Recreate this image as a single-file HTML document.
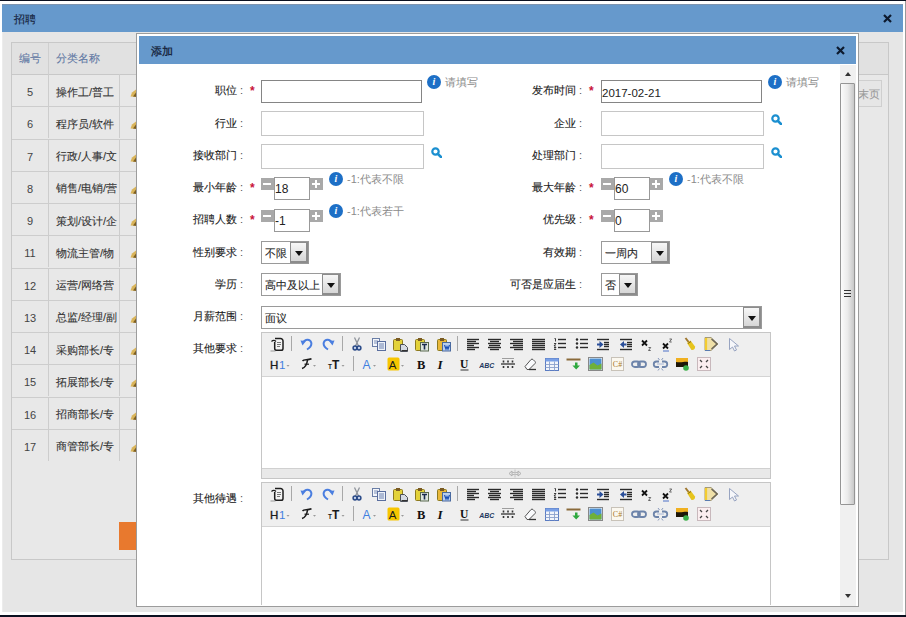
<!DOCTYPE html><html><head><meta charset="utf-8"><style>
*{box-sizing:border-box;margin:0;padding:0}
html,body{width:906px;height:617px;overflow:hidden;background:#fff;font-family:"Liberation Sans",sans-serif;font-size:12px;color:#333;position:relative}
div,span,svg{position:absolute}
.cj{font-size:11px;line-height:13px;white-space:nowrap;-webkit-text-stroke:0.1px currentColor}
.lbl{font-size:11px;line-height:13px;white-space:nowrap;text-align:right;color:#1a1a1a;-webkit-text-stroke:0.1px #1a1a1a}
.colon{font-size:11px;line-height:13px;color:#555}
.ast{color:#c8123a;font-size:12px;line-height:12px;font-weight:bold}
.inp{background:#fff;border:1px solid #c6c6c6}
.inp.dark{border-color:#858585}
.sel{background:#fff;border:1px solid #9a9a9a}
.sbtn{top:0;bottom:0;right:0;width:18px;border:2px solid #8c8c8c;border-left-width:1px;border-top-width:1px;background:linear-gradient(#f7f7f7,#d6d6d6)}
.sbtn:after{content:"";position:absolute;left:3.5px;top:8px;border-left:4px solid transparent;border-right:4px solid transparent;border-top:5px solid #111}
.nbtn{width:13px;height:12px;background:#a9a9a9}
.nbtn:before{content:"";position:absolute;left:2px;top:5px;width:8px;height:2px;background:#fff}
.nbtn.p:after{content:"";position:absolute;left:5px;top:2px;width:2px;height:8px;background:#fff}
.info{width:14px;height:14px;border-radius:7px;background:#1d6fc6;color:#fff;font:italic bold 10px/14px "Liberation Serif",serif;text-align:center}
.hint{color:#8a8a8a;font-size:11px;line-height:13px;white-space:nowrap}
.tb{background:#efefef;border:1px solid #c9c9c9}
</style></head><body>
<div style="left:0;top:0;width:906px;height:1px;background:#0b1020"></div>
<div style="left:2px;top:4px;width:901px;height:28px;background:#6699cc"></div>
<div class="cj" style="left:14px;top:13px;font-size:11px;color:#15223a;-webkit-text-stroke:0.15px #15223a">招聘</div>
<svg style="left:883px;top:14px" width="9" height="9" viewBox="0 0 9 9"><path d="M1 1L8 8M8 1L1 8" stroke="#0d1a2e" stroke-width="2.2"/></svg>
<div style="left:2px;top:32px;width:901px;height:580px;background:#e6e6e6;border-left:1px solid #ececec"></div>
<div style="left:905px;top:1px;width:1px;height:614px;background:#9a9a9a"></div>
<div style="left:2px;top:4px;width:901px;height:1px;background:#7d94b0"></div>
<div style="left:0;top:615px;width:906px;height:2px;background:#0b1020"></div>
<div style="left:11px;top:42px;width:878px;height:518px;border:1px solid #c8c8c8;background:#e8e8e8"></div>
<div style="left:12px;top:43px;width:876px;height:32px;background:#e1e1e1;border-bottom:1px solid #c8c8c8"></div>
<div style="left:48px;top:43px;width:1px;height:31px;background:#cfcfcf"></div>
<div class="cj" style="left:19px;top:52px;color:#5f78a3">编号</div>
<div class="cj" style="left:56px;top:52px;color:#5f78a3">分类名称</div>
<div style="left:12px;top:106.2px;width:840px;height:1px;background:#cdcdcd"></div>
<div style="left:48px;top:74.0px;width:1px;height:32.2px;background:#cdcdcd"></div>
<div style="left:119px;top:74.0px;width:1px;height:32.2px;background:#cdcdcd"></div>
<div style="left:12px;top:86.0px;width:36px;text-align:center;font-size:11px;line-height:13px;color:#444">5</div>
<div class="cj" style="left:56px;top:85.5px;color:#333">操作工/普工</div>
<svg style="left:129px;top:89.0px" width="8" height="8" viewBox="0 0 8 8"><path d="M1.5 7.5L3 3.5 7 0.5 8 1v7z" fill="#d9b45a"/><path d="M4 7.5L7 3.5 8 4v4z" fill="#7a5c22"/></svg>
<div style="left:12px;top:138.5px;width:840px;height:1px;background:#cdcdcd"></div>
<div style="left:48px;top:106.2px;width:1px;height:32.2px;background:#cdcdcd"></div>
<div style="left:119px;top:106.2px;width:1px;height:32.2px;background:#cdcdcd"></div>
<div style="left:12px;top:118.2px;width:36px;text-align:center;font-size:11px;line-height:13px;color:#444">6</div>
<div class="cj" style="left:56px;top:117.8px;color:#333">程序员/软件</div>
<svg style="left:129px;top:121.2px" width="8" height="8" viewBox="0 0 8 8"><path d="M1.5 7.5L3 3.5 7 0.5 8 1v7z" fill="#d9b45a"/><path d="M4 7.5L7 3.5 8 4v4z" fill="#7a5c22"/></svg>
<div style="left:12px;top:170.8px;width:840px;height:1px;background:#cdcdcd"></div>
<div style="left:48px;top:138.5px;width:1px;height:32.2px;background:#cdcdcd"></div>
<div style="left:119px;top:138.5px;width:1px;height:32.2px;background:#cdcdcd"></div>
<div style="left:12px;top:150.5px;width:36px;text-align:center;font-size:11px;line-height:13px;color:#444">7</div>
<div class="cj" style="left:56px;top:150.0px;color:#333">行政/人事/文</div>
<svg style="left:129px;top:153.5px" width="8" height="8" viewBox="0 0 8 8"><path d="M1.5 7.5L3 3.5 7 0.5 8 1v7z" fill="#d9b45a"/><path d="M4 7.5L7 3.5 8 4v4z" fill="#7a5c22"/></svg>
<div style="left:12px;top:203.0px;width:840px;height:1px;background:#cdcdcd"></div>
<div style="left:48px;top:170.8px;width:1px;height:32.2px;background:#cdcdcd"></div>
<div style="left:119px;top:170.8px;width:1px;height:32.2px;background:#cdcdcd"></div>
<div style="left:12px;top:182.8px;width:36px;text-align:center;font-size:11px;line-height:13px;color:#444">8</div>
<div class="cj" style="left:56px;top:182.2px;color:#333">销售/电销/营</div>
<svg style="left:129px;top:185.8px" width="8" height="8" viewBox="0 0 8 8"><path d="M1.5 7.5L3 3.5 7 0.5 8 1v7z" fill="#d9b45a"/><path d="M4 7.5L7 3.5 8 4v4z" fill="#7a5c22"/></svg>
<div style="left:12px;top:235.2px;width:840px;height:1px;background:#cdcdcd"></div>
<div style="left:48px;top:203.0px;width:1px;height:32.2px;background:#cdcdcd"></div>
<div style="left:119px;top:203.0px;width:1px;height:32.2px;background:#cdcdcd"></div>
<div style="left:12px;top:215.0px;width:36px;text-align:center;font-size:11px;line-height:13px;color:#444">9</div>
<div class="cj" style="left:56px;top:214.5px;color:#333">策划/设计/企</div>
<svg style="left:129px;top:218.0px" width="8" height="8" viewBox="0 0 8 8"><path d="M1.5 7.5L3 3.5 7 0.5 8 1v7z" fill="#d9b45a"/><path d="M4 7.5L7 3.5 8 4v4z" fill="#7a5c22"/></svg>
<div style="left:12px;top:267.5px;width:840px;height:1px;background:#cdcdcd"></div>
<div style="left:48px;top:235.2px;width:1px;height:32.2px;background:#cdcdcd"></div>
<div style="left:119px;top:235.2px;width:1px;height:32.2px;background:#cdcdcd"></div>
<div style="left:12px;top:247.2px;width:36px;text-align:center;font-size:11px;line-height:13px;color:#444">11</div>
<div class="cj" style="left:56px;top:246.8px;color:#333">物流主管/物</div>
<svg style="left:129px;top:250.2px" width="8" height="8" viewBox="0 0 8 8"><path d="M1.5 7.5L3 3.5 7 0.5 8 1v7z" fill="#d9b45a"/><path d="M4 7.5L7 3.5 8 4v4z" fill="#7a5c22"/></svg>
<div style="left:12px;top:299.8px;width:840px;height:1px;background:#cdcdcd"></div>
<div style="left:48px;top:267.5px;width:1px;height:32.2px;background:#cdcdcd"></div>
<div style="left:119px;top:267.5px;width:1px;height:32.2px;background:#cdcdcd"></div>
<div style="left:12px;top:279.5px;width:36px;text-align:center;font-size:11px;line-height:13px;color:#444">12</div>
<div class="cj" style="left:56px;top:279.0px;color:#333">运营/网络营</div>
<svg style="left:129px;top:282.5px" width="8" height="8" viewBox="0 0 8 8"><path d="M1.5 7.5L3 3.5 7 0.5 8 1v7z" fill="#d9b45a"/><path d="M4 7.5L7 3.5 8 4v4z" fill="#7a5c22"/></svg>
<div style="left:12px;top:332.0px;width:840px;height:1px;background:#cdcdcd"></div>
<div style="left:48px;top:299.8px;width:1px;height:32.2px;background:#cdcdcd"></div>
<div style="left:119px;top:299.8px;width:1px;height:32.2px;background:#cdcdcd"></div>
<div style="left:12px;top:311.8px;width:36px;text-align:center;font-size:11px;line-height:13px;color:#444">13</div>
<div class="cj" style="left:56px;top:311.2px;color:#333">总监/经理/副</div>
<svg style="left:129px;top:314.8px" width="8" height="8" viewBox="0 0 8 8"><path d="M1.5 7.5L3 3.5 7 0.5 8 1v7z" fill="#d9b45a"/><path d="M4 7.5L7 3.5 8 4v4z" fill="#7a5c22"/></svg>
<div style="left:12px;top:364.2px;width:840px;height:1px;background:#cdcdcd"></div>
<div style="left:48px;top:332.0px;width:1px;height:32.2px;background:#cdcdcd"></div>
<div style="left:119px;top:332.0px;width:1px;height:32.2px;background:#cdcdcd"></div>
<div style="left:12px;top:344.0px;width:36px;text-align:center;font-size:11px;line-height:13px;color:#444">14</div>
<div class="cj" style="left:56px;top:343.5px;color:#333">采购部长/专</div>
<svg style="left:129px;top:347.0px" width="8" height="8" viewBox="0 0 8 8"><path d="M1.5 7.5L3 3.5 7 0.5 8 1v7z" fill="#d9b45a"/><path d="M4 7.5L7 3.5 8 4v4z" fill="#7a5c22"/></svg>
<div style="left:12px;top:396.5px;width:840px;height:1px;background:#cdcdcd"></div>
<div style="left:48px;top:364.2px;width:1px;height:32.2px;background:#cdcdcd"></div>
<div style="left:119px;top:364.2px;width:1px;height:32.2px;background:#cdcdcd"></div>
<div style="left:12px;top:376.2px;width:36px;text-align:center;font-size:11px;line-height:13px;color:#444">15</div>
<div class="cj" style="left:56px;top:375.8px;color:#333">拓展部长/专</div>
<svg style="left:129px;top:379.2px" width="8" height="8" viewBox="0 0 8 8"><path d="M1.5 7.5L3 3.5 7 0.5 8 1v7z" fill="#d9b45a"/><path d="M4 7.5L7 3.5 8 4v4z" fill="#7a5c22"/></svg>
<div style="left:12px;top:428.8px;width:840px;height:1px;background:#cdcdcd"></div>
<div style="left:48px;top:396.5px;width:1px;height:32.2px;background:#cdcdcd"></div>
<div style="left:119px;top:396.5px;width:1px;height:32.2px;background:#cdcdcd"></div>
<div style="left:12px;top:408.5px;width:36px;text-align:center;font-size:11px;line-height:13px;color:#444">16</div>
<div class="cj" style="left:56px;top:408.0px;color:#333">招商部长/专</div>
<svg style="left:129px;top:411.5px" width="8" height="8" viewBox="0 0 8 8"><path d="M1.5 7.5L3 3.5 7 0.5 8 1v7z" fill="#d9b45a"/><path d="M4 7.5L7 3.5 8 4v4z" fill="#7a5c22"/></svg>
<div style="left:48px;top:428.8px;width:1px;height:32.2px;background:#cdcdcd"></div>
<div style="left:119px;top:428.8px;width:1px;height:32.2px;background:#cdcdcd"></div>
<div style="left:12px;top:440.8px;width:36px;text-align:center;font-size:11px;line-height:13px;color:#444">17</div>
<div class="cj" style="left:56px;top:440.2px;color:#333">商管部长/专</div>
<svg style="left:129px;top:443.8px" width="8" height="8" viewBox="0 0 8 8"><path d="M1.5 7.5L3 3.5 7 0.5 8 1v7z" fill="#d9b45a"/><path d="M4 7.5L7 3.5 8 4v4z" fill="#7a5c22"/></svg>
<div style="left:119px;top:522px;width:60px;height:28px;background:#e8792e"></div>
<div style="left:852px;top:80px;width:30px;height:27px;border:1px solid #cfcfcf;background:#e6e6e6"></div>
<div class="cj" style="left:858px;top:88px;color:#9a9a9a">末页</div>
<div style="left:136px;top:33px;width:723px;height:574px;background:#fff;border:1px solid #9c9c9c"></div>
<div style="left:139px;top:36px;width:717px;height:28px;background:#6699cc"></div>
<div class="cj" style="left:151px;top:45px;color:#15223a;-webkit-text-stroke:0.3px #15223a">添加</div>
<svg style="left:836px;top:46px" width="9" height="9" viewBox="0 0 9 9"><path d="M1 1L8 8M8 1L1 8" stroke="#0d1a2e" stroke-width="2.2"/></svg>
<div style="left:840px;top:65px;width:16px;height:541px;background:#f0f0f0"></div>
<div style="left:845px;top:72px;border-left:3.5px solid transparent;border-right:3.5px solid transparent;border-bottom:4px solid #333"></div>
<div style="left:845px;top:594px;border-left:3.5px solid transparent;border-right:3.5px solid transparent;border-top:4px solid #333"></div>
<div style="left:840px;top:83px;width:15px;height:422px;border:1px solid #959595;border-radius:1px;background:linear-gradient(90deg,#fbfbfb,#ebebeb 50%,#c8c8c8)"></div>
<div style="left:844px;top:290px;width:7px;height:1px;background:#333"></div>
<div style="left:844px;top:293px;width:7px;height:1px;background:#333"></div>
<div style="left:844px;top:296px;width:7px;height:1px;background:#333"></div>
<div class="lbl" style="left:117px;top:84px;width:120px">职位</div>
<div class="colon" style="left:240px;top:84px">:</div>
<div class="ast" style="left:250px;top:85px">*</div>
<div class="inp dark" style="left:261px;top:80px;width:161px;height:23px"></div>
<div class="info" style="left:427px;top:75px">i</div>
<div class="hint" style="left:445px;top:76px">请填写</div>
<div class="lbl" style="left:456px;top:84px;width:120px">发布时间</div>
<div class="colon" style="left:579px;top:84px">:</div>
<div class="ast" style="left:589px;top:85px">*</div>
<div class="inp dark" style="left:601px;top:80px;width:161px;height:23px"></div>
<div style="left:602px;top:86px;font-size:11.5px;line-height:14px;color:#222">2017-02-21</div>
<div class="info" style="left:768px;top:75px">i</div>
<div class="hint" style="left:786px;top:76px">请填写</div>
<div class="lbl" style="left:117px;top:117px;width:120px">行业</div>
<div class="colon" style="left:240px;top:117px">:</div>
<div class="inp" style="left:261px;top:111px;width:163px;height:25px"></div>
<div class="lbl" style="left:456px;top:117px;width:120px">企业</div>
<div class="colon" style="left:579px;top:117px">:</div>
<div class="inp" style="left:601px;top:111px;width:163px;height:25px"></div>
<svg style="left:771px;top:114px" width="11" height="11" viewBox="0 0 11 11"><circle cx="4.5" cy="4.5" r="3.2" fill="none" stroke="#1b8fd0" stroke-width="2.2"/><path d="M6.8 6.8L10 10" stroke="#1b8fd0" stroke-width="2.6" stroke-linecap="round"/></svg>
<div class="lbl" style="left:117px;top:149px;width:120px">接收部门</div>
<div class="colon" style="left:240px;top:149px">:</div>
<div class="inp" style="left:261px;top:144px;width:163px;height:25px"></div>
<svg style="left:431px;top:147px" width="11" height="11" viewBox="0 0 11 11"><circle cx="4.5" cy="4.5" r="3.2" fill="none" stroke="#1b8fd0" stroke-width="2.2"/><path d="M6.8 6.8L10 10" stroke="#1b8fd0" stroke-width="2.6" stroke-linecap="round"/></svg>
<div class="lbl" style="left:456px;top:149px;width:120px">处理部门</div>
<div class="colon" style="left:579px;top:149px">:</div>
<div class="inp" style="left:601px;top:144px;width:163px;height:25px"></div>
<svg style="left:771px;top:147px" width="11" height="11" viewBox="0 0 11 11"><circle cx="4.5" cy="4.5" r="3.2" fill="none" stroke="#1b8fd0" stroke-width="2.2"/><path d="M6.8 6.8L10 10" stroke="#1b8fd0" stroke-width="2.6" stroke-linecap="round"/></svg>
<div class="lbl" style="left:117px;top:181px;width:120px">最小年龄</div>
<div class="colon" style="left:240px;top:181px">:</div>
<div class="ast" style="left:250px;top:182px">*</div>
<div class="nbtn" style="left:261px;top:178px"></div>
<div class="inp" style="left:274px;top:177px;width:36px;height:23px;border-color:#999"></div>
<div style="left:275px;top:182px;font-size:12px;line-height:14px;color:#222">18</div>
<div class="nbtn p" style="left:310px;top:178px"></div>
<div class="info" style="left:329px;top:172px">i</div>
<div class="hint" style="left:347px;top:173px">-1:代表不限</div>
<div class="lbl" style="left:456px;top:181px;width:120px">最大年龄</div>
<div class="colon" style="left:579px;top:181px">:</div>
<div class="ast" style="left:589px;top:182px">*</div>
<div class="nbtn" style="left:601px;top:178px"></div>
<div class="inp" style="left:614px;top:177px;width:36px;height:23px;border-color:#999"></div>
<div style="left:615px;top:182px;font-size:12px;line-height:14px;color:#222">60</div>
<div class="nbtn p" style="left:650px;top:178px"></div>
<div class="info" style="left:669px;top:172px">i</div>
<div class="hint" style="left:687px;top:173px">-1:代表不限</div>
<div class="lbl" style="left:117px;top:213px;width:120px">招聘人数</div>
<div class="colon" style="left:240px;top:213px">:</div>
<div class="ast" style="left:250px;top:214px">*</div>
<div class="nbtn" style="left:261px;top:210px"></div>
<div class="inp" style="left:274px;top:209px;width:36px;height:23px;border-color:#999"></div>
<div style="left:275px;top:214px;font-size:12px;line-height:14px;color:#222">-1</div>
<div class="nbtn p" style="left:310px;top:210px"></div>
<div class="info" style="left:329px;top:204px">i</div>
<div class="hint" style="left:347px;top:205px">-1:代表若干</div>
<div class="lbl" style="left:456px;top:213px;width:120px">优先级</div>
<div class="colon" style="left:579px;top:213px">:</div>
<div class="ast" style="left:589px;top:214px">*</div>
<div class="nbtn" style="left:601px;top:210px"></div>
<div class="inp" style="left:614px;top:209px;width:36px;height:23px;border-color:#999"></div>
<div style="left:615px;top:214px;font-size:12px;line-height:14px;color:#222">0</div>
<div class="nbtn p" style="left:650px;top:210px"></div>
<div class="lbl" style="left:117px;top:246px;width:120px">性别要求</div>
<div class="colon" style="left:240px;top:246px">:</div>
<div class="sel" style="left:261px;top:241px;width:48px;height:23px"><div class="sbtn"></div></div>
<div class="cj" style="left:265px;top:247px;font-size:11px;color:#222">不限</div>
<div class="lbl" style="left:456px;top:246px;width:120px">有效期</div>
<div class="colon" style="left:579px;top:246px">:</div>
<div class="sel" style="left:601px;top:241px;width:69px;height:23px"><div class="sbtn"></div></div>
<div class="cj" style="left:605px;top:247px;font-size:11px;color:#222">一周内</div>
<div class="lbl" style="left:117px;top:278px;width:120px">学历</div>
<div class="colon" style="left:240px;top:278px">:</div>
<div class="sel" style="left:261px;top:273px;width:80px;height:23px"><div class="sbtn"></div></div>
<div class="cj" style="left:265px;top:279px;font-size:11px;color:#222">高中及以上</div>
<div class="lbl" style="left:456px;top:278px;width:120px">可否是应届生</div>
<div class="colon" style="left:579px;top:278px">:</div>
<div class="sel" style="left:601px;top:273px;width:37px;height:23px"><div class="sbtn"></div></div>
<div class="cj" style="left:605px;top:279px;font-size:11px;color:#222">否</div>
<div class="lbl" style="left:117px;top:310px;width:120px">月薪范围</div>
<div class="colon" style="left:240px;top:310px">:</div>
<div class="sel" style="left:261px;top:306px;width:501px;height:23px"><div class="sbtn"></div></div>
<div class="cj" style="left:265px;top:312px;font-size:11px;color:#222">面议</div>
<div class="lbl" style="left:117px;top:342px;width:120px">其他要求</div>
<div class="colon" style="left:240px;top:342px">:</div>
<div style="left:261px;top:332px;width:510px;height:147px;border:1px solid #c6c6c6;background:#fff"></div>
<div style="left:262px;top:333px;width:508px;height:44px;background:#efefef;border-bottom:1px solid #d4d4d4"></div>
<svg style="left:270px;top:336px" width="15" height="16" viewBox="0 0 15 16"><path d="M5 2.5h5.5a2.5 2.5 0 0 1 2.5 2.5v7.5a1.8 1.8 0 0 1-1.8 1.8H6.5a1.8 1.8 0 0 1-1.8-1.8V6" fill="#f4f4f4" stroke="#1e1e1e" stroke-width="1.5"/><path d="M1.5 5.5c1.5-1.5 3-1.5 4.5 0" fill="none" stroke="#1e1e1e" stroke-width="1.3"/><path d="M7 6.5h4M7 8.5h4M7 10.5h3" stroke="#777" stroke-width="1"/><path d="M0.5 15h5" stroke="#999" stroke-width="1"/></svg>
<svg style="left:300px;top:337px" width="13" height="16" viewBox="0 0 13 16"><path d="M3 5.5C5 2 10 1.5 11.2 5.5 12 8.5 9.5 11 7 12.5" fill="none" stroke="#4a7ee0" stroke-width="2"/><path d="M0.5 3.5l5.5 0.5-3.5 4.5z" fill="#4a7ee0"/></svg>
<svg style="left:322px;top:337px" width="13" height="16" viewBox="0 0 13 16"><path d="M10 5.5C8 2 3 1.5 1.8 5.5 1 8.5 3.5 11 6 12.5" fill="none" stroke="#4a7ee0" stroke-width="2"/><path d="M12.5 3.5L7 4l3.5 4.5z" fill="#4a7ee0"/></svg>
<svg style="left:351px;top:336px" width="12" height="16" viewBox="0 0 12 16"><path d="M3.5 1.5L7.5 10M8.5 1.5L4.5 10" stroke="#8f949c" stroke-width="1.3"/><circle cx="4" cy="12" r="1.9" fill="#c8d4ec" stroke="#2a4a88" stroke-width="1.5"/><circle cx="8" cy="12" r="1.9" fill="#c8d4ec" stroke="#2a4a88" stroke-width="1.5"/></svg>
<svg style="left:371px;top:336px" width="16" height="16" viewBox="0 0 16 16"><rect x="1.5" y="2.5" width="7" height="8" fill="#f4f6fa" stroke="#6a7ea6"/><path d="M3 5h4M3 7h4" stroke="#7d90b8"/><rect x="6.5" y="5.5" width="8" height="9" fill="#eef2f8" stroke="#5a6e9e"/><path d="M8 8h5M8 10h5M8 12h5" stroke="#6a80b0" stroke-width="1.1"/></svg>
<svg style="left:392px;top:336px" width="17" height="16" viewBox="0 0 17 16"><rect x="1.5" y="3.5" width="9" height="11" rx="1" fill="#e3d23a" stroke="#8d7a20"/><rect x="4" y="2" width="4" height="3" fill="#7a5a22"/><path d="M8.5 8.5h4l3 3v4h-7z" fill="#d4dae4" stroke="#4a4f58"/><path d="M9.5 14.5h6" stroke="#333"/></svg>
<svg style="left:414px;top:336px" width="16" height="16" viewBox="0 0 16 16"><rect x="1.5" y="3.5" width="9" height="11" rx="1" fill="#e3d23a" stroke="#8d7a20"/><rect x="4" y="2" width="4" height="3" fill="#7a5a22"/><rect x="6.5" y="6.5" width="8" height="8.5" fill="#dfe6e0" stroke="#5a6a50"/><path d="M8 8.5h5M10.5 8.5v5" stroke="#1a2a50" stroke-width="1.6"/></svg>
<svg style="left:436px;top:336px" width="16" height="16" viewBox="0 0 16 16"><rect x="1.5" y="3.5" width="9" height="11" rx="1" fill="#e9b83a" stroke="#8d7a20"/><rect x="4" y="2" width="4" height="3" fill="#7a5a22"/><rect x="6.5" y="6.5" width="8" height="8.5" fill="#bcd0ee" stroke="#4a6aa0"/><path d="M8.5 9l1.5 4 1-2.5 1 2.5 1.5-4" fill="none" stroke="#1c50b8" stroke-width="1.2"/></svg>
<svg style="left:466px;top:337px" width="14" height="16" viewBox="0 0 14 16"><path d="M1 2.5H13" stroke="#2b2b2b" stroke-width="1.4"/><path d="M1 4.5H10" stroke="#2b2b2b" stroke-width="1.4"/><path d="M1 6.5H13" stroke="#2b2b2b" stroke-width="1.4"/><path d="M1 8.5H8" stroke="#2b2b2b" stroke-width="1.4"/><path d="M1 10.5H13" stroke="#2b2b2b" stroke-width="1.4"/><path d="M1 12.5H9" stroke="#2b2b2b" stroke-width="1.4"/></svg>
<svg style="left:487px;top:337px" width="15" height="16" viewBox="0 0 15 16"><path d="M1 2.5H14" stroke="#2b2b2b" stroke-width="1.4"/><path d="M3 4.5H12" stroke="#2b2b2b" stroke-width="1.4"/><path d="M1 6.5H14" stroke="#2b2b2b" stroke-width="1.4"/><path d="M2 8.5H13" stroke="#2b2b2b" stroke-width="1.4"/><path d="M1 10.5H14" stroke="#2b2b2b" stroke-width="1.4"/><path d="M3 12.5H12" stroke="#2b2b2b" stroke-width="1.4"/></svg>
<svg style="left:509px;top:337px" width="15" height="16" viewBox="0 0 15 16"><path d="M1 2.5H14" stroke="#2b2b2b" stroke-width="1.4"/><path d="M4 4.5H14" stroke="#2b2b2b" stroke-width="1.4"/><path d="M1 6.5H14" stroke="#2b2b2b" stroke-width="1.4"/><path d="M4 8.5H14" stroke="#2b2b2b" stroke-width="1.4"/><path d="M1 10.5H14" stroke="#2b2b2b" stroke-width="1.4"/><path d="M5 12.5H14" stroke="#2b2b2b" stroke-width="1.4"/></svg>
<svg style="left:531px;top:337px" width="15" height="16" viewBox="0 0 15 16"><path d="M1 2.5H14" stroke="#2b2b2b" stroke-width="1.4"/><path d="M1 4.5H14" stroke="#2b2b2b" stroke-width="1.4"/><path d="M1 6.5H14" stroke="#2b2b2b" stroke-width="1.4"/><path d="M1 8.5H14" stroke="#2b2b2b" stroke-width="1.4"/><path d="M1 10.5H14" stroke="#2b2b2b" stroke-width="1.4"/><path d="M1 12.5H14" stroke="#2b2b2b" stroke-width="1.4"/></svg>
<svg style="left:553px;top:337px" width="15" height="16" viewBox="0 0 15 16"><path d="M1.5 1.5h1v3M1 6.5h2l-2 2.5h2M1 10.5h2l-1 1 1 1H1" fill="none" stroke="#2b2b2b" stroke-width="0.9"/><path d="M5 2.5H13" stroke="#2b2b2b" stroke-width="1.4"/><path d="M5 6.5H13" stroke="#2b2b2b" stroke-width="1.4"/><path d="M5 10.5H13" stroke="#2b2b2b" stroke-width="1.4"/></svg>
<svg style="left:575px;top:337px" width="14" height="16" viewBox="0 0 14 16"><circle cx="2" cy="2.5" r="1.2" fill="#2b2b2b"/><circle cx="2" cy="6.5" r="1.2" fill="#2b2b2b"/><circle cx="2" cy="10.5" r="1.2" fill="#2b2b2b"/><path d="M5 2.5H13" stroke="#2b2b2b" stroke-width="1.4"/><path d="M5 6.5H13" stroke="#2b2b2b" stroke-width="1.4"/><path d="M5 10.5H13" stroke="#2b2b2b" stroke-width="1.4"/></svg>
<svg style="left:596px;top:337px" width="14" height="16" viewBox="0 0 14 16"><path d="M1 2.5H13" stroke="#2b2b2b" stroke-width="1.4"/><path d="M1 12.5H13" stroke="#2b2b2b" stroke-width="1.4"/><path d="M8 5.5H13" stroke="#2b2b2b" stroke-width="1.4"/><path d="M8 7.5H13" stroke="#2b2b2b" stroke-width="1.4"/><path d="M8 9.5H13" stroke="#2b2b2b" stroke-width="1.4"/><path d="M1 6.5h2.5v-2.5l4 3.5-4 3.5v-2.5H1z" fill="#2a4f9a"/></svg>
<svg style="left:619px;top:337px" width="14" height="16" viewBox="0 0 14 16"><path d="M1 2.5H13" stroke="#2b2b2b" stroke-width="1.4"/><path d="M1 12.5H13" stroke="#2b2b2b" stroke-width="1.4"/><path d="M8 5.5H13" stroke="#2b2b2b" stroke-width="1.4"/><path d="M8 7.5H13" stroke="#2b2b2b" stroke-width="1.4"/><path d="M8 9.5H13" stroke="#2b2b2b" stroke-width="1.4"/><path d="M7.5 6.5H5v-2.5l-4 3.5 4 3.5v-2.5h2.5z" fill="#2a4f9a"/></svg>
<svg style="left:641px;top:337px" width="11" height="16" viewBox="0 0 11 16"><path d="M1 3.5l5 5M6 3.5l-5 5" stroke="#111" stroke-width="1.8"/><path d="M7.5 10.5h2.2l-2.2 3h2.2" fill="none" stroke="#555" stroke-width="0.9"/></svg>
<svg style="left:662px;top:337px" width="12" height="16" viewBox="0 0 12 16"><path d="M1 6.5l5 5M6 6.5l-5 5" stroke="#111" stroke-width="1.8"/><path d="M7.5 2h2.2l-2.2 3h2.2" fill="none" stroke="#555" stroke-width="0.9"/><path d="M1 14h6" stroke="#3a62c4" stroke-width="0.9"/></svg>
<svg style="left:683px;top:337px" width="13" height="16" viewBox="0 0 13 16"><path d="M2.5 1L6 5.5" stroke="#a07830" stroke-width="2"/><path d="M4 6L7.5 3.5 12 9.5C12.5 12 10.5 13.5 8.5 13z" fill="#e6c41c"/><path d="M5 6.5L8 4.5" stroke="#8a6a20" stroke-width="1"/></svg>
<svg style="left:703px;top:336px" width="17" height="16" viewBox="0 0 17 16"><path d="M2 1.5h6l7 6.5-7 6.5H2z" fill="#efe0a8" stroke="#a39a7a"/><path d="M3 2v12" stroke="#f3cc30" stroke-width="2.2"/><path d="M8.5 3l5.5 5-5.5 5" fill="none" stroke="#6a6458" stroke-width="1.4"/><path d="M2 14.5h5" stroke="#5a7bb0" stroke-width="1"/></svg>
<svg style="left:728px;top:337px" width="11" height="16" viewBox="0 0 11 16"><path d="M1.5 1.5v11l3-2.5 2 4 2-1-2-4h4z" fill="#f6f7fa" stroke="#8d9bbb" stroke-width="0.9"/></svg>
<div style="left:291px;top:336px;width:1px;height:15px;background:#a8a8a8"></div>
<div style="left:342px;top:336px;width:1px;height:15px;background:#a8a8a8"></div>
<div style="left:457px;top:336px;width:1px;height:15px;background:#a8a8a8"></div>
<svg style="left:270px;top:356px" width="21" height="16" viewBox="0 0 21 16"><text x="0" y="12.5" font-family="Liberation Sans" font-size="11.5" fill="#1b1b1b" stroke="#1b1b1b" stroke-width="0.35">H</text><text x="9" y="12.5" font-family="Liberation Sans" font-size="11.5" fill="#3f7ee0">1</text><path d="M16.5 9h3l-1.5 1.8z" fill="#999"/></svg>
<svg style="left:300px;top:356px" width="18" height="16" viewBox="0 0 18 16"><path d="M2.5 5C4 3 7 4.5 11.5 2.8" fill="none" stroke="#1b1b1b" stroke-width="1.5"/><path d="M7.5 4C7 8 5.5 11.5 2 12.5" fill="none" stroke="#1b1b1b" stroke-width="1.6"/><path d="M4.5 8.2h4.5" stroke="#1b1b1b" stroke-width="1.2"/><path d="M13 9h3l-1.5 1.8z" fill="#999"/></svg>
<svg style="left:327px;top:356px" width="19" height="16" viewBox="0 0 19 16"><text x="1" y="13" font-family="Liberation Sans" font-weight="bold" font-size="6.5" fill="#1b1b1b">T</text><text x="5" y="12.5" font-family="Liberation Sans" font-weight="bold" font-size="12" fill="#1b1b1b">T</text><path d="M14.5 9h3l-1.5 1.8z" fill="#999"/></svg>
<svg style="left:362px;top:356px" width="16" height="16" viewBox="0 0 16 16"><text x="0.5" y="12.5" font-family="Liberation Sans" font-size="12" fill="#3f7ee0">A</text><path d="M11 9h3l-1.5 1.8z" fill="#999"/></svg>
<svg style="left:387px;top:356px" width="18" height="16" viewBox="0 0 18 16"><rect x="0.5" y="1.5" width="12" height="13" rx="1.5" fill="#f7c600"/><text x="1.8" y="12.5" font-family="Liberation Sans" font-size="11.5" fill="#1b1b1b">A</text><path d="M14 9h3l-1.5 1.8z" fill="#999"/></svg>
<svg style="left:416px;top:356px" width="12" height="16" viewBox="0 0 12 16"><text x="1" y="12.5" font-family="Liberation Serif" font-weight="bold" font-size="12.5" fill="#111">B</text></svg>
<svg style="left:437px;top:356px" width="11" height="16" viewBox="0 0 11 16"><text x="0.5" y="12.5" font-family="Liberation Serif" font-style="italic" font-weight="bold" font-size="13" fill="#111">I</text></svg>
<svg style="left:459px;top:356px" width="12" height="16" viewBox="0 0 12 16"><text x="1" y="11.5" font-family="Liberation Serif" font-weight="bold" font-size="11.5" fill="#111">U</text><path d="M1.5 14h8" stroke="#333" stroke-width="1"/></svg>
<svg style="left:479px;top:356px" width="16" height="16" viewBox="0 0 16 16"><text x="0.3" y="12" font-family="Liberation Sans" font-weight="bold" font-style="italic" font-size="8" fill="#22385e" textLength="15" lengthAdjust="spacingAndGlyphs">ABC</text></svg>
<svg style="left:500px;top:356px" width="16" height="16" viewBox="0 0 16 16"><path d="M2 2.5h12" stroke="#888" stroke-width="0.8"/><path d="M3.5 4.5v2M8 4.5v2M12.5 4.5v2M3.5 10v2M8 10v2M12.5 10v2" stroke="#333" stroke-width="1.6"/><path d="M1 8h14" stroke="#333" stroke-width="1.3"/></svg>
<svg style="left:523px;top:356px" width="14" height="16" viewBox="0 0 14 16"><path d="M2 10.5L8 3.5a1.5 1.5 0 0 1 2 0l2 2a1.5 1.5 0 0 1 0 2L6 13.5H4z" fill="#fafbfd" stroke="#555" stroke-width="1"/><path d="M6 13.5h7" stroke="#333" stroke-width="1.3"/></svg>
<svg style="left:544px;top:356px" width="16" height="16" viewBox="0 0 16 16"><rect x="1.5" y="2.5" width="13" height="12" fill="#f2f5fb" stroke="#5b7cc2"/><rect x="1.5" y="2.5" width="13" height="3" fill="#7aa0e6"/><path d="M1.5 8.5h13M1.5 11.5h13M5.5 5.5v9M10.5 5.5v9" stroke="#8aa0cc" stroke-width="0.9"/></svg>
<svg style="left:566px;top:356px" width="16" height="16" viewBox="0 0 16 16"><path d="M0.5 3.5h14" stroke="#8a6a3a" stroke-width="2"/><path d="M9 6.5h2.5v3H14l-3.8 4-3.8-4h2.6z" fill="#2ea83e"/></svg>
<svg style="left:587px;top:356px" width="17" height="16" viewBox="0 0 17 16"><rect x="1.5" y="1.5" width="14" height="13" fill="#fff" stroke="#888"/><rect x="2.5" y="2.5" width="12" height="11" fill="#4d8fd0"/><path d="M2.5 13.5V9l4-2.5 4 3 4-2v6z" fill="#6fb03a"/></svg>
<svg style="left:610px;top:356px" width="15" height="16" viewBox="0 0 15 16"><rect x="1.5" y="1.5" width="12" height="13" fill="#fbf8f0" stroke="#c8c2b8"/><text x="2.8" y="11" font-family="Liberation Serif" font-size="8" fill="#a8782c">C#</text></svg>
<svg style="left:631px;top:356px" width="16" height="16" viewBox="0 0 16 16"><rect x="1" y="5.5" width="8" height="5.5" rx="2.75" fill="none" stroke="#6d84aa" stroke-width="1.8"/><rect x="7" y="5.5" width="8" height="5.5" rx="2.75" fill="none" stroke="#6d84aa" stroke-width="1.8"/></svg>
<svg style="left:652px;top:356px" width="17" height="16" viewBox="0 0 17 16"><path d="M7 5.5H4.5a2.75 2.75 0 0 0 0 5.5H7M10 5.5h2.5a2.75 2.75 0 0 1 0 5.5H10" fill="none" stroke="#6d84aa" stroke-width="1.8"/><path d="M6 2L7.5 4M11 2L9.5 4M6 14.5l1.5-2M11 14.5l-1.5-2" stroke="#7d8fb5" stroke-width="0.9"/><path d="M5 8h7" stroke="#a8b8d8" stroke-width="1"/></svg>
<svg style="left:675px;top:356px" width="15" height="16" viewBox="0 0 15 16"><rect x="1" y="2" width="12" height="9" fill="#1d1608"/><path d="M1 2h12v4c-3-1-6 1-12 0z" fill="#f0b020"/><circle cx="11" cy="12" r="2.8" fill="#3cb04a"/></svg>
<svg style="left:696px;top:356px" width="16" height="16" viewBox="0 0 16 16"><rect x="1.5" y="1.5" width="13" height="13" fill="#fbeef0" stroke="#c8b8bc"/><path d="M4 4l2 2M12 4l-2 2M4 12l2-2M12 12l-2-2" stroke="#444" stroke-width="1.3"/></svg>
<div style="left:353px;top:356px;width:1px;height:15px;background:#a8a8a8"></div>
<div style="left:262px;top:468px;width:508px;height:10px;background:#e9e9e9;border-top:1px solid #d0d0d0"></div>
<svg style="left:508px;top:469px" width="14" height="9" viewBox="0 0 14 9"><path d="M1 4.5L4 2v5zM13 4.5L10 2v5z" fill="none" stroke="#b0b0b0"/><path d="M4 3.5h6M4 5.5h6" stroke="#b8b8b8"/><path d="M7 0.5v8" stroke="#c4c4c4"/></svg>
<div class="lbl" style="left:117px;top:492px;width:120px">其他待遇</div>
<div class="colon" style="left:240px;top:492px">:</div>
<div style="left:261px;top:482px;width:510px;height:124px;border:1px solid #c6c6c6;background:#fff"></div>
<div style="left:262px;top:483px;width:508px;height:44px;background:#efefef;border-bottom:1px solid #d4d4d4"></div>
<svg style="left:270px;top:486px" width="15" height="16" viewBox="0 0 15 16"><path d="M5 2.5h5.5a2.5 2.5 0 0 1 2.5 2.5v7.5a1.8 1.8 0 0 1-1.8 1.8H6.5a1.8 1.8 0 0 1-1.8-1.8V6" fill="#f4f4f4" stroke="#1e1e1e" stroke-width="1.5"/><path d="M1.5 5.5c1.5-1.5 3-1.5 4.5 0" fill="none" stroke="#1e1e1e" stroke-width="1.3"/><path d="M7 6.5h4M7 8.5h4M7 10.5h3" stroke="#777" stroke-width="1"/><path d="M0.5 15h5" stroke="#999" stroke-width="1"/></svg>
<svg style="left:300px;top:487px" width="13" height="16" viewBox="0 0 13 16"><path d="M3 5.5C5 2 10 1.5 11.2 5.5 12 8.5 9.5 11 7 12.5" fill="none" stroke="#4a7ee0" stroke-width="2"/><path d="M0.5 3.5l5.5 0.5-3.5 4.5z" fill="#4a7ee0"/></svg>
<svg style="left:322px;top:487px" width="13" height="16" viewBox="0 0 13 16"><path d="M10 5.5C8 2 3 1.5 1.8 5.5 1 8.5 3.5 11 6 12.5" fill="none" stroke="#4a7ee0" stroke-width="2"/><path d="M12.5 3.5L7 4l3.5 4.5z" fill="#4a7ee0"/></svg>
<svg style="left:351px;top:486px" width="12" height="16" viewBox="0 0 12 16"><path d="M3.5 1.5L7.5 10M8.5 1.5L4.5 10" stroke="#8f949c" stroke-width="1.3"/><circle cx="4" cy="12" r="1.9" fill="#c8d4ec" stroke="#2a4a88" stroke-width="1.5"/><circle cx="8" cy="12" r="1.9" fill="#c8d4ec" stroke="#2a4a88" stroke-width="1.5"/></svg>
<svg style="left:371px;top:486px" width="16" height="16" viewBox="0 0 16 16"><rect x="1.5" y="2.5" width="7" height="8" fill="#f4f6fa" stroke="#6a7ea6"/><path d="M3 5h4M3 7h4" stroke="#7d90b8"/><rect x="6.5" y="5.5" width="8" height="9" fill="#eef2f8" stroke="#5a6e9e"/><path d="M8 8h5M8 10h5M8 12h5" stroke="#6a80b0" stroke-width="1.1"/></svg>
<svg style="left:392px;top:486px" width="17" height="16" viewBox="0 0 17 16"><rect x="1.5" y="3.5" width="9" height="11" rx="1" fill="#e3d23a" stroke="#8d7a20"/><rect x="4" y="2" width="4" height="3" fill="#7a5a22"/><path d="M8.5 8.5h4l3 3v4h-7z" fill="#d4dae4" stroke="#4a4f58"/><path d="M9.5 14.5h6" stroke="#333"/></svg>
<svg style="left:414px;top:486px" width="16" height="16" viewBox="0 0 16 16"><rect x="1.5" y="3.5" width="9" height="11" rx="1" fill="#e3d23a" stroke="#8d7a20"/><rect x="4" y="2" width="4" height="3" fill="#7a5a22"/><rect x="6.5" y="6.5" width="8" height="8.5" fill="#dfe6e0" stroke="#5a6a50"/><path d="M8 8.5h5M10.5 8.5v5" stroke="#1a2a50" stroke-width="1.6"/></svg>
<svg style="left:436px;top:486px" width="16" height="16" viewBox="0 0 16 16"><rect x="1.5" y="3.5" width="9" height="11" rx="1" fill="#e9b83a" stroke="#8d7a20"/><rect x="4" y="2" width="4" height="3" fill="#7a5a22"/><rect x="6.5" y="6.5" width="8" height="8.5" fill="#bcd0ee" stroke="#4a6aa0"/><path d="M8.5 9l1.5 4 1-2.5 1 2.5 1.5-4" fill="none" stroke="#1c50b8" stroke-width="1.2"/></svg>
<svg style="left:466px;top:487px" width="14" height="16" viewBox="0 0 14 16"><path d="M1 2.5H13" stroke="#2b2b2b" stroke-width="1.4"/><path d="M1 4.5H10" stroke="#2b2b2b" stroke-width="1.4"/><path d="M1 6.5H13" stroke="#2b2b2b" stroke-width="1.4"/><path d="M1 8.5H8" stroke="#2b2b2b" stroke-width="1.4"/><path d="M1 10.5H13" stroke="#2b2b2b" stroke-width="1.4"/><path d="M1 12.5H9" stroke="#2b2b2b" stroke-width="1.4"/></svg>
<svg style="left:487px;top:487px" width="15" height="16" viewBox="0 0 15 16"><path d="M1 2.5H14" stroke="#2b2b2b" stroke-width="1.4"/><path d="M3 4.5H12" stroke="#2b2b2b" stroke-width="1.4"/><path d="M1 6.5H14" stroke="#2b2b2b" stroke-width="1.4"/><path d="M2 8.5H13" stroke="#2b2b2b" stroke-width="1.4"/><path d="M1 10.5H14" stroke="#2b2b2b" stroke-width="1.4"/><path d="M3 12.5H12" stroke="#2b2b2b" stroke-width="1.4"/></svg>
<svg style="left:509px;top:487px" width="15" height="16" viewBox="0 0 15 16"><path d="M1 2.5H14" stroke="#2b2b2b" stroke-width="1.4"/><path d="M4 4.5H14" stroke="#2b2b2b" stroke-width="1.4"/><path d="M1 6.5H14" stroke="#2b2b2b" stroke-width="1.4"/><path d="M4 8.5H14" stroke="#2b2b2b" stroke-width="1.4"/><path d="M1 10.5H14" stroke="#2b2b2b" stroke-width="1.4"/><path d="M5 12.5H14" stroke="#2b2b2b" stroke-width="1.4"/></svg>
<svg style="left:531px;top:487px" width="15" height="16" viewBox="0 0 15 16"><path d="M1 2.5H14" stroke="#2b2b2b" stroke-width="1.4"/><path d="M1 4.5H14" stroke="#2b2b2b" stroke-width="1.4"/><path d="M1 6.5H14" stroke="#2b2b2b" stroke-width="1.4"/><path d="M1 8.5H14" stroke="#2b2b2b" stroke-width="1.4"/><path d="M1 10.5H14" stroke="#2b2b2b" stroke-width="1.4"/><path d="M1 12.5H14" stroke="#2b2b2b" stroke-width="1.4"/></svg>
<svg style="left:553px;top:487px" width="15" height="16" viewBox="0 0 15 16"><path d="M1.5 1.5h1v3M1 6.5h2l-2 2.5h2M1 10.5h2l-1 1 1 1H1" fill="none" stroke="#2b2b2b" stroke-width="0.9"/><path d="M5 2.5H13" stroke="#2b2b2b" stroke-width="1.4"/><path d="M5 6.5H13" stroke="#2b2b2b" stroke-width="1.4"/><path d="M5 10.5H13" stroke="#2b2b2b" stroke-width="1.4"/></svg>
<svg style="left:575px;top:487px" width="14" height="16" viewBox="0 0 14 16"><circle cx="2" cy="2.5" r="1.2" fill="#2b2b2b"/><circle cx="2" cy="6.5" r="1.2" fill="#2b2b2b"/><circle cx="2" cy="10.5" r="1.2" fill="#2b2b2b"/><path d="M5 2.5H13" stroke="#2b2b2b" stroke-width="1.4"/><path d="M5 6.5H13" stroke="#2b2b2b" stroke-width="1.4"/><path d="M5 10.5H13" stroke="#2b2b2b" stroke-width="1.4"/></svg>
<svg style="left:596px;top:487px" width="14" height="16" viewBox="0 0 14 16"><path d="M1 2.5H13" stroke="#2b2b2b" stroke-width="1.4"/><path d="M1 12.5H13" stroke="#2b2b2b" stroke-width="1.4"/><path d="M8 5.5H13" stroke="#2b2b2b" stroke-width="1.4"/><path d="M8 7.5H13" stroke="#2b2b2b" stroke-width="1.4"/><path d="M8 9.5H13" stroke="#2b2b2b" stroke-width="1.4"/><path d="M1 6.5h2.5v-2.5l4 3.5-4 3.5v-2.5H1z" fill="#2a4f9a"/></svg>
<svg style="left:619px;top:487px" width="14" height="16" viewBox="0 0 14 16"><path d="M1 2.5H13" stroke="#2b2b2b" stroke-width="1.4"/><path d="M1 12.5H13" stroke="#2b2b2b" stroke-width="1.4"/><path d="M8 5.5H13" stroke="#2b2b2b" stroke-width="1.4"/><path d="M8 7.5H13" stroke="#2b2b2b" stroke-width="1.4"/><path d="M8 9.5H13" stroke="#2b2b2b" stroke-width="1.4"/><path d="M7.5 6.5H5v-2.5l-4 3.5 4 3.5v-2.5h2.5z" fill="#2a4f9a"/></svg>
<svg style="left:641px;top:487px" width="11" height="16" viewBox="0 0 11 16"><path d="M1 3.5l5 5M6 3.5l-5 5" stroke="#111" stroke-width="1.8"/><path d="M7.5 10.5h2.2l-2.2 3h2.2" fill="none" stroke="#555" stroke-width="0.9"/></svg>
<svg style="left:662px;top:487px" width="12" height="16" viewBox="0 0 12 16"><path d="M1 6.5l5 5M6 6.5l-5 5" stroke="#111" stroke-width="1.8"/><path d="M7.5 2h2.2l-2.2 3h2.2" fill="none" stroke="#555" stroke-width="0.9"/><path d="M1 14h6" stroke="#3a62c4" stroke-width="0.9"/></svg>
<svg style="left:683px;top:487px" width="13" height="16" viewBox="0 0 13 16"><path d="M2.5 1L6 5.5" stroke="#a07830" stroke-width="2"/><path d="M4 6L7.5 3.5 12 9.5C12.5 12 10.5 13.5 8.5 13z" fill="#e6c41c"/><path d="M5 6.5L8 4.5" stroke="#8a6a20" stroke-width="1"/></svg>
<svg style="left:703px;top:486px" width="17" height="16" viewBox="0 0 17 16"><path d="M2 1.5h6l7 6.5-7 6.5H2z" fill="#efe0a8" stroke="#a39a7a"/><path d="M3 2v12" stroke="#f3cc30" stroke-width="2.2"/><path d="M8.5 3l5.5 5-5.5 5" fill="none" stroke="#6a6458" stroke-width="1.4"/><path d="M2 14.5h5" stroke="#5a7bb0" stroke-width="1"/></svg>
<svg style="left:728px;top:487px" width="11" height="16" viewBox="0 0 11 16"><path d="M1.5 1.5v11l3-2.5 2 4 2-1-2-4h4z" fill="#f6f7fa" stroke="#8d9bbb" stroke-width="0.9"/></svg>
<div style="left:291px;top:486px;width:1px;height:15px;background:#a8a8a8"></div>
<div style="left:342px;top:486px;width:1px;height:15px;background:#a8a8a8"></div>
<div style="left:457px;top:486px;width:1px;height:15px;background:#a8a8a8"></div>
<svg style="left:270px;top:506px" width="21" height="16" viewBox="0 0 21 16"><text x="0" y="12.5" font-family="Liberation Sans" font-size="11.5" fill="#1b1b1b" stroke="#1b1b1b" stroke-width="0.35">H</text><text x="9" y="12.5" font-family="Liberation Sans" font-size="11.5" fill="#3f7ee0">1</text><path d="M16.5 9h3l-1.5 1.8z" fill="#999"/></svg>
<svg style="left:300px;top:506px" width="18" height="16" viewBox="0 0 18 16"><path d="M2.5 5C4 3 7 4.5 11.5 2.8" fill="none" stroke="#1b1b1b" stroke-width="1.5"/><path d="M7.5 4C7 8 5.5 11.5 2 12.5" fill="none" stroke="#1b1b1b" stroke-width="1.6"/><path d="M4.5 8.2h4.5" stroke="#1b1b1b" stroke-width="1.2"/><path d="M13 9h3l-1.5 1.8z" fill="#999"/></svg>
<svg style="left:327px;top:506px" width="19" height="16" viewBox="0 0 19 16"><text x="1" y="13" font-family="Liberation Sans" font-weight="bold" font-size="6.5" fill="#1b1b1b">T</text><text x="5" y="12.5" font-family="Liberation Sans" font-weight="bold" font-size="12" fill="#1b1b1b">T</text><path d="M14.5 9h3l-1.5 1.8z" fill="#999"/></svg>
<svg style="left:362px;top:506px" width="16" height="16" viewBox="0 0 16 16"><text x="0.5" y="12.5" font-family="Liberation Sans" font-size="12" fill="#3f7ee0">A</text><path d="M11 9h3l-1.5 1.8z" fill="#999"/></svg>
<svg style="left:387px;top:506px" width="18" height="16" viewBox="0 0 18 16"><rect x="0.5" y="1.5" width="12" height="13" rx="1.5" fill="#f7c600"/><text x="1.8" y="12.5" font-family="Liberation Sans" font-size="11.5" fill="#1b1b1b">A</text><path d="M14 9h3l-1.5 1.8z" fill="#999"/></svg>
<svg style="left:416px;top:506px" width="12" height="16" viewBox="0 0 12 16"><text x="1" y="12.5" font-family="Liberation Serif" font-weight="bold" font-size="12.5" fill="#111">B</text></svg>
<svg style="left:437px;top:506px" width="11" height="16" viewBox="0 0 11 16"><text x="0.5" y="12.5" font-family="Liberation Serif" font-style="italic" font-weight="bold" font-size="13" fill="#111">I</text></svg>
<svg style="left:459px;top:506px" width="12" height="16" viewBox="0 0 12 16"><text x="1" y="11.5" font-family="Liberation Serif" font-weight="bold" font-size="11.5" fill="#111">U</text><path d="M1.5 14h8" stroke="#333" stroke-width="1"/></svg>
<svg style="left:479px;top:506px" width="16" height="16" viewBox="0 0 16 16"><text x="0.3" y="12" font-family="Liberation Sans" font-weight="bold" font-style="italic" font-size="8" fill="#22385e" textLength="15" lengthAdjust="spacingAndGlyphs">ABC</text></svg>
<svg style="left:500px;top:506px" width="16" height="16" viewBox="0 0 16 16"><path d="M2 2.5h12" stroke="#888" stroke-width="0.8"/><path d="M3.5 4.5v2M8 4.5v2M12.5 4.5v2M3.5 10v2M8 10v2M12.5 10v2" stroke="#333" stroke-width="1.6"/><path d="M1 8h14" stroke="#333" stroke-width="1.3"/></svg>
<svg style="left:523px;top:506px" width="14" height="16" viewBox="0 0 14 16"><path d="M2 10.5L8 3.5a1.5 1.5 0 0 1 2 0l2 2a1.5 1.5 0 0 1 0 2L6 13.5H4z" fill="#fafbfd" stroke="#555" stroke-width="1"/><path d="M6 13.5h7" stroke="#333" stroke-width="1.3"/></svg>
<svg style="left:544px;top:506px" width="16" height="16" viewBox="0 0 16 16"><rect x="1.5" y="2.5" width="13" height="12" fill="#f2f5fb" stroke="#5b7cc2"/><rect x="1.5" y="2.5" width="13" height="3" fill="#7aa0e6"/><path d="M1.5 8.5h13M1.5 11.5h13M5.5 5.5v9M10.5 5.5v9" stroke="#8aa0cc" stroke-width="0.9"/></svg>
<svg style="left:566px;top:506px" width="16" height="16" viewBox="0 0 16 16"><path d="M0.5 3.5h14" stroke="#8a6a3a" stroke-width="2"/><path d="M9 6.5h2.5v3H14l-3.8 4-3.8-4h2.6z" fill="#2ea83e"/></svg>
<svg style="left:587px;top:506px" width="17" height="16" viewBox="0 0 17 16"><rect x="1.5" y="1.5" width="14" height="13" fill="#fff" stroke="#888"/><rect x="2.5" y="2.5" width="12" height="11" fill="#4d8fd0"/><path d="M2.5 13.5V9l4-2.5 4 3 4-2v6z" fill="#6fb03a"/></svg>
<svg style="left:610px;top:506px" width="15" height="16" viewBox="0 0 15 16"><rect x="1.5" y="1.5" width="12" height="13" fill="#fbf8f0" stroke="#c8c2b8"/><text x="2.8" y="11" font-family="Liberation Serif" font-size="8" fill="#a8782c">C#</text></svg>
<svg style="left:631px;top:506px" width="16" height="16" viewBox="0 0 16 16"><rect x="1" y="5.5" width="8" height="5.5" rx="2.75" fill="none" stroke="#6d84aa" stroke-width="1.8"/><rect x="7" y="5.5" width="8" height="5.5" rx="2.75" fill="none" stroke="#6d84aa" stroke-width="1.8"/></svg>
<svg style="left:652px;top:506px" width="17" height="16" viewBox="0 0 17 16"><path d="M7 5.5H4.5a2.75 2.75 0 0 0 0 5.5H7M10 5.5h2.5a2.75 2.75 0 0 1 0 5.5H10" fill="none" stroke="#6d84aa" stroke-width="1.8"/><path d="M6 2L7.5 4M11 2L9.5 4M6 14.5l1.5-2M11 14.5l-1.5-2" stroke="#7d8fb5" stroke-width="0.9"/><path d="M5 8h7" stroke="#a8b8d8" stroke-width="1"/></svg>
<svg style="left:675px;top:506px" width="15" height="16" viewBox="0 0 15 16"><rect x="1" y="2" width="12" height="9" fill="#1d1608"/><path d="M1 2h12v4c-3-1-6 1-12 0z" fill="#f0b020"/><circle cx="11" cy="12" r="2.8" fill="#3cb04a"/></svg>
<svg style="left:696px;top:506px" width="16" height="16" viewBox="0 0 16 16"><rect x="1.5" y="1.5" width="13" height="13" fill="#fbeef0" stroke="#c8b8bc"/><path d="M4 4l2 2M12 4l-2 2M4 12l2-2M12 12l-2-2" stroke="#444" stroke-width="1.3"/></svg>
<div style="left:353px;top:506px;width:1px;height:15px;background:#a8a8a8"></div>
<div style="left:136px;top:606px;width:723px;height:1px;background:#9c9c9c"></div>
<div style="left:137px;top:605px;width:703px;height:1px;background:#fff"></div>
</body></html>
